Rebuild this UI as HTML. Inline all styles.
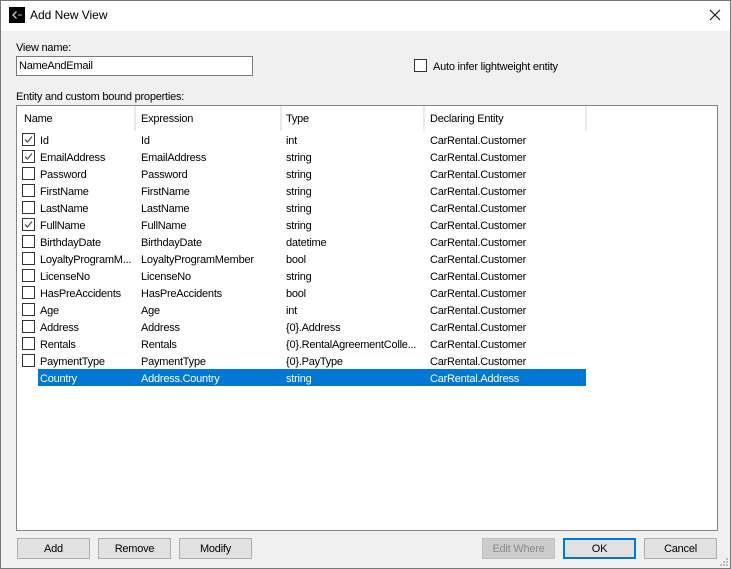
<!DOCTYPE html>
<html><head><meta charset="utf-8"><style>
html,body{margin:0;padding:0}
body{width:731px;height:569px;overflow:hidden;background:#f0f0f0;position:relative;font:11px/17px "Liberation Sans",sans-serif;letter-spacing:-.23px;color:#000}
div,span,svg{position:absolute;white-space:nowrap;box-sizing:border-box}
.r{left:0;width:701px;height:17px}
.r span{top:1.5px}
.c1{left:23px}.c2{left:124px}.c3{left:269px}.c4{left:413px}
.cb{left:5px;top:2px;width:13px;height:13px;border:1px solid #333;background:#fff}
.cb svg{left:0;top:0}
.b{top:538px;width:73px;height:21px;background:#e1e1e1;border:1px solid #adadad;text-align:center;line-height:20px}
.h{top:4px;line-height:17px;padding-top:1px}
.s{top:0;width:2px;height:25px;background:#eaeaea}
</style></head><body>
<div style="left:0;top:0;width:731px;height:569px;border:1px solid #777;z-index:5;pointer-events:none"></div>
<div style="left:0;top:0;width:731px;height:31px;background:#fff"></div>
<div style="left:9px;top:7px;width:16px;height:16px;background:#000"></div>
<svg style="left:9px;top:7px" width="16" height="16"><path d="M7.5 4.5L4 8L7.5 11.5" fill="none" stroke="#ccc" stroke-width="1.3"/><path d="M9 8H13" stroke="#999" stroke-width="1.2"/></svg>
<div style="left:30px;top:7px;font-size:12px;line-height:17px;letter-spacing:-.03px">Add New View</div>
<svg style="left:709px;top:9px" width="12" height="12"><path d="M1 1L11 11M11 1L1 11" stroke="#111" stroke-width="1.1" fill="none"/></svg>

<div style="left:16px;top:40px">View name:</div>
<div style="left:16px;top:56px;width:237px;height:20px;background:#fff;border:1px solid #7a7a7a;padding-left:2px;line-height:19px">NameAndEmail</div>
<div style="left:414px;top:59px;width:13px;height:13px;background:#fff;border:1px solid #333"></div>
<div style="left:433px;top:59px">Auto infer lightweight entity</div>
<div style="left:16px;top:89px">Entity and custom bound properties:</div>

<div style="left:16px;top:105px;width:702px;height:426px;background:#fff;border:1px solid #828790;overflow:hidden">
<div class="h" style="left:7px">Name</div>
<div class="s" style="left:117px"></div>
<div class="h" style="left:124px">Expression</div>
<div class="s" style="left:263px"></div>
<div class="h" style="left:269px">Type</div>
<div class="s" style="left:406px"></div>
<div class="h" style="left:413px">Declaring Entity</div>
<div class="s" style="left:568px"></div>

<div class="r" style="top:25px"><div class="cb"><svg width="11" height="11"><path d="M2 5.5L4.5 8L9 2.5" fill="none" stroke="#555" stroke-width="1.3"/></svg></div><span class="c1">Id</span><span class="c2">Id</span><span class="c3">int</span><span class="c4">CarRental.Customer</span></div>
<div class="r" style="top:42px"><div class="cb"><svg width="11" height="11"><path d="M2 5.5L4.5 8L9 2.5" fill="none" stroke="#555" stroke-width="1.3"/></svg></div><span class="c1">EmailAddress</span><span class="c2">EmailAddress</span><span class="c3">string</span><span class="c4">CarRental.Customer</span></div>
<div class="r" style="top:59px"><div class="cb"></div><span class="c1">Password</span><span class="c2">Password</span><span class="c3">string</span><span class="c4">CarRental.Customer</span></div>
<div class="r" style="top:76px"><div class="cb"></div><span class="c1">FirstName</span><span class="c2">FirstName</span><span class="c3">string</span><span class="c4">CarRental.Customer</span></div>
<div class="r" style="top:93px"><div class="cb"></div><span class="c1">LastName</span><span class="c2">LastName</span><span class="c3">string</span><span class="c4">CarRental.Customer</span></div>
<div class="r" style="top:110px"><div class="cb"><svg width="11" height="11"><path d="M2 5.5L4.5 8L9 2.5" fill="none" stroke="#555" stroke-width="1.3"/></svg></div><span class="c1">FullName</span><span class="c2">FullName</span><span class="c3">string</span><span class="c4">CarRental.Customer</span></div>
<div class="r" style="top:127px"><div class="cb"></div><span class="c1">BirthdayDate</span><span class="c2">BirthdayDate</span><span class="c3">datetime</span><span class="c4">CarRental.Customer</span></div>
<div class="r" style="top:144px"><div class="cb"></div><span class="c1">LoyaltyProgramM...</span><span class="c2">LoyaltyProgramMember</span><span class="c3">bool</span><span class="c4">CarRental.Customer</span></div>
<div class="r" style="top:161px"><div class="cb"></div><span class="c1">LicenseNo</span><span class="c2">LicenseNo</span><span class="c3">string</span><span class="c4">CarRental.Customer</span></div>
<div class="r" style="top:178px"><div class="cb"></div><span class="c1">HasPreAccidents</span><span class="c2">HasPreAccidents</span><span class="c3">bool</span><span class="c4">CarRental.Customer</span></div>
<div class="r" style="top:195px"><div class="cb"></div><span class="c1">Age</span><span class="c2">Age</span><span class="c3">int</span><span class="c4">CarRental.Customer</span></div>
<div class="r" style="top:212px"><div class="cb"></div><span class="c1">Address</span><span class="c2">Address</span><span class="c3">{0}.Address</span><span class="c4">CarRental.Customer</span></div>
<div class="r" style="top:229px"><div class="cb"></div><span class="c1">Rentals</span><span class="c2">Rentals</span><span class="c3">{0}.RentalAgreementColle...</span><span class="c4">CarRental.Customer</span></div>
<div class="r" style="top:246px"><div class="cb"></div><span class="c1">PaymentType</span><span class="c2">PaymentType</span><span class="c3">{0}.PayType</span><span class="c4">CarRental.Customer</span></div>
<div class="r" style="top:263px;color:#fff"><div style="left:21px;top:0;width:548px;height:17px;background:#0078d7"></div><span class="c1">Country</span><span class="c2">Address.Country</span><span class="c3">string</span><span class="c4">CarRental.Address</span></div>
</div>

<div class="b" style="left:17px">Add</div>
<div class="b" style="left:98px">Remove</div>
<div class="b" style="left:179px">Modify</div>
<div class="b" style="left:482px;background:#ccc;border-color:#bfbfbf;color:#8a8a8a">Edit Where</div>
<div class="b" style="left:563px;border:2px solid #0078d7;line-height:18px">OK</div>
<div class="b" style="left:644px">Cancel</div>
<svg style="left:718px;top:556px" width="12" height="12" fill="#bbb"><rect x="8" y="2" width="2" height="2"/><rect x="5" y="5" width="2" height="2"/><rect x="8" y="5" width="2" height="2"/><rect x="2" y="8" width="2" height="2"/><rect x="5" y="8" width="2" height="2"/><rect x="8" y="8" width="2" height="2"/></svg>
</body></html>
